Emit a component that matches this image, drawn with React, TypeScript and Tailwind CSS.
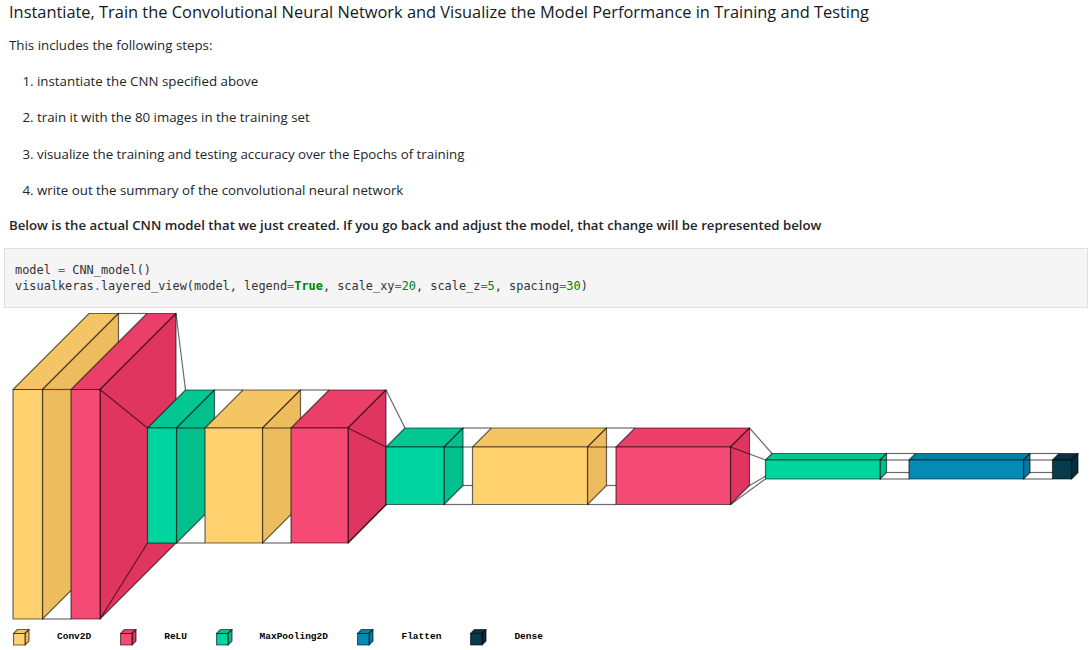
type Shade = { front: string; top: string; side: string };

const yellow: Shade = { front: "#ffd16f", top: "#f5c465", side: "#edbc5e" };
const red: Shade = { front: "#f54a73", top: "#eb3f6a", side: "#e03560" };
const green: Shade = { front: "#00d59f", top: "#02c792", side: "#02c08d" };
const blue: Shade = { front: "#058ab3", top: "#0480a6", side: "#047aa0" };
const dark: Shade = { front: "#073b4c", top: "#053343", side: "#042e3d" };

type Layer = { x: number; w: number; y: number; h: number; d: number; c: Shade };

const layers: Layer[] = [
  { x: 13, w: 29.5, y: 389.5, h: 229.5, d: 76, c: yellow },
  { x: 71, w: 29, y: 389.5, h: 229.5, d: 76, c: red },
  { x: 147.5, w: 29, y: 428, h: 115, d: 38, c: green },
  { x: 205, w: 57.5, y: 428, h: 115, d: 38, c: yellow },
  { x: 291, w: 57, y: 428, h: 115, d: 38, c: red },
  { x: 386, w: 58, y: 447, h: 57.5, d: 19, c: green },
  { x: 472.5, w: 115, y: 447, h: 57.5, d: 19, c: yellow },
  { x: 616, w: 114.5, y: 447, h: 57.5, d: 19, c: red },
  { x: 765.5, w: 114.5, y: 460, h: 19, d: 6.5, c: green },
  { x: 909, w: 114.5, y: 460, h: 19, d: 6.5, c: blue },
  { x: 1052.5, w: 19, y: 460, h: 19, d: 6.5, c: dark },
];

const edge = "rgba(0,0,0,0.58)";

function Box({ x, w, y, h, d, c }: Layer) {
  const r = x + w;
  const b = y + h;
  return (
    <g stroke={edge} strokeWidth={1.2} strokeLinejoin="round">
      <polygon points={`${x},${y} ${x + d},${y - d} ${r + d},${y - d} ${r},${y}`} fill={c.top} />
      <polygon points={`${r},${y} ${r + d},${y - d} ${r + d},${b - d} ${r},${b}`} fill={c.side} />
      <rect x={x} y={y} width={w} height={h} fill={c.front} />
    </g>
  );
}

function Funnel({ a, b }: { a: Layer; b: Layer }) {
  const ar = a.x + a.w;
  const lines = [
    [ar, a.y, b.x, b.y],
    [ar, a.y + a.h, b.x, b.y + b.h],
    [ar + a.d, a.y - a.d, b.x + b.d, b.y - b.d],
    [ar + a.d, a.y + a.h - a.d, b.x + b.d, b.y + b.h - b.d],
  ];
  return (
    <g stroke={edge} strokeWidth={1.2}>
      {lines.map((l, i) => (
        <line key={i} x1={l[0]} y1={l[1]} x2={l[2]} y2={l[3]} />
      ))}
    </g>
  );
}

function Cube({ c }: { c: Shade }) {
  return (
    <svg width="17" height="17" viewBox="0 0 17 17" className="block shrink-0">
      <Box x={0.5} y={4.5} w={11.5} h={11.5} d={4} c={c} />
    </svg>
  );
}

const legend = [
  { name: "Conv2D", c: yellow, gap: "mr-[29px]" },
  { name: "ReLU", c: red, gap: "mr-[28.5px]" },
  { name: "MaxPooling2D", c: green, gap: "mr-[29.5px]" },
  { name: "Flatten", c: blue, gap: "mr-[29px]" },
  { name: "Dense", c: dark, gap: "" },
];

export default function App() {
  return (
    <div className="w-[1092px] h-[650px] overflow-hidden bg-white text-[#212529] font-['Open_Sans',sans-serif] text-[13.3px]">
      <h4 className="pl-[9px] text-[16.4px] leading-[24px] font-medium text-[#16191c]">
        Instantiate, Train the Convolutional Neural Network and Visualize the Model Performance in Training and Testing
      </h4>
      <p className="pl-[9px] mt-[11px] leading-[20px]">This includes the following steps:</p>
      <ol className="list-decimal pl-[37px] mt-[8px] leading-[36.4px]">
        <li>instantiate the CNN specified above</li>
        <li>train it with the 80 images in the training set</li>
        <li>visualize the training and testing accuracy over the Epochs of training</li>
        <li>write out the summary of the convolutional neural network</li>
      </ol>
      <p className="pl-[9px] mt-[6.4px] leading-[20px] font-semibold text-[13.23px]">
        Below is the actual CNN model that we just created. If you go back and adjust the model, that change will be
        represented below
      </p>
      <pre className="mx-[4px] mt-[13px] h-[60px] pt-[14px] pl-[10px] bg-[#f5f5f5] border border-[#e0e0e0] font-['DejaVu_Sans_Mono',monospace] text-[11.9px] leading-[15.5px] text-[#333]">
        model <span className="text-[#aa22ff]">=</span> CNN_model(){"\n"}
        visualkeras<span className="text-[#aa22ff]">.</span>layered_view(model, legend
        <span className="text-[#aa22ff]">=</span>
        <span className="text-[#008000] font-bold">True</span>, scale_xy<span className="text-[#aa22ff]">=</span>
        <span className="text-[#008000]">20</span>, scale_z<span className="text-[#aa22ff]">=</span>
        <span className="text-[#008000]">5</span>, spacing<span className="text-[#aa22ff]">=</span>
        <span className="text-[#008000]">30</span>)
      </pre>
      <svg width="1092" height="314" viewBox="0 308 1092 314" className="block">
        {layers.map((l, i) => (
          <g key={i}>
            {i > 0 && <Funnel a={layers[i - 1]} b={l} />}
            <Box {...l} />
          </g>
        ))}
      </svg>
      <div className="flex items-center h-[30px] pl-[13px] font-['Liberation_Mono',monospace] text-[9.5px] font-bold text-black">
        {legend.map((item) => (
          <div key={item.name} className={`flex items-center ${item.gap}`}>
            <Cube c={item.c} />
            <span className="ml-[27px]">{item.name}</span>
          </div>
        ))}
      </div>
    </div>
  );
}
